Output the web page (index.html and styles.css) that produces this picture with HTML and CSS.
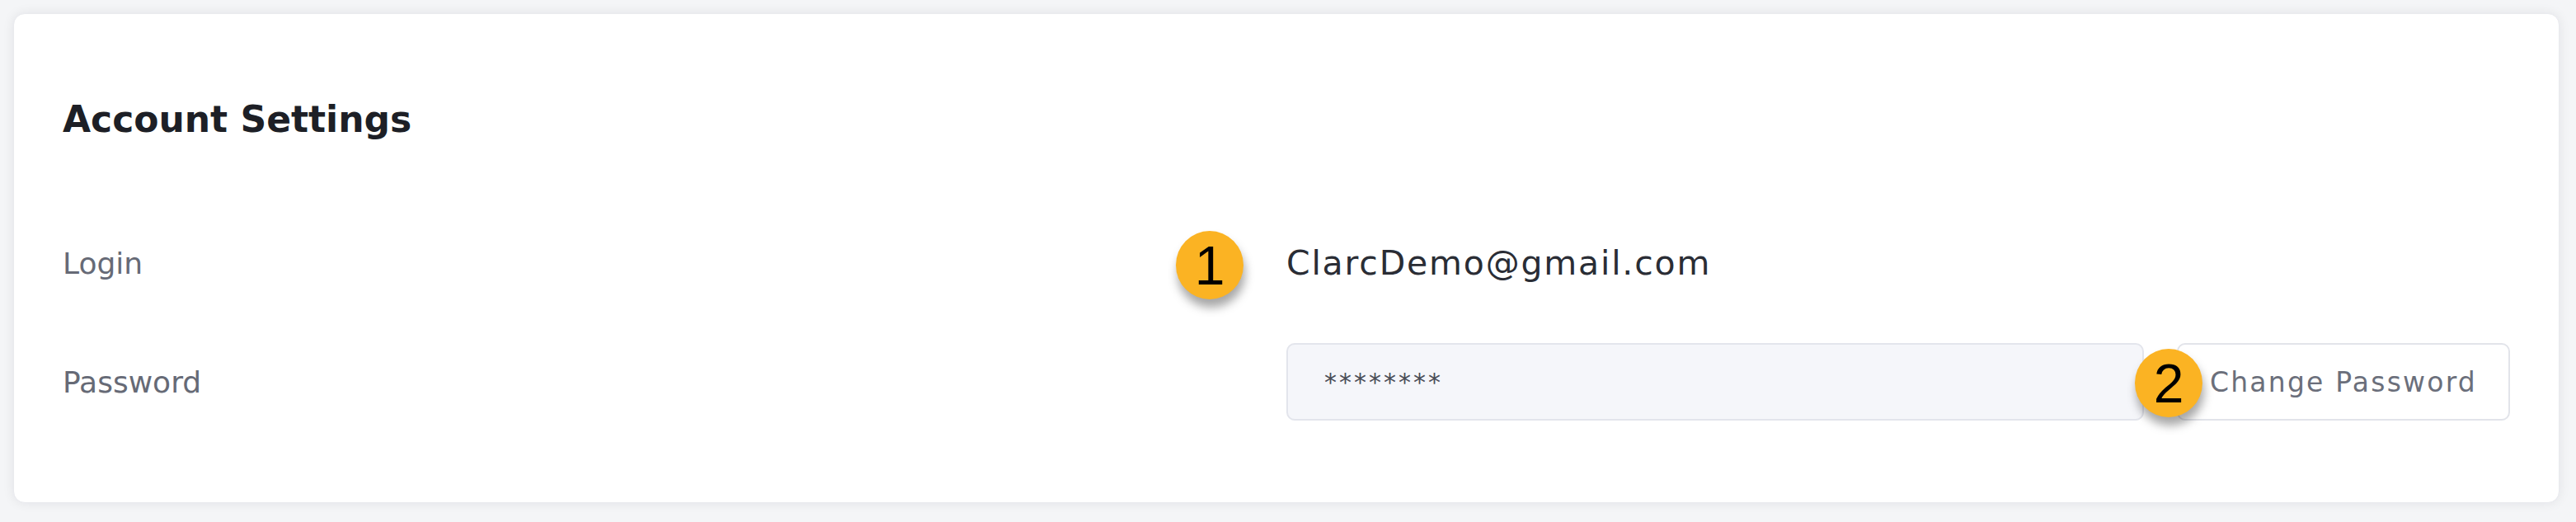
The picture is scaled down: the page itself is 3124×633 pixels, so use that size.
FILE: index.html
```html
<!DOCTYPE html>
<html lang="en">
<head>
    <meta charset="UTF-8">
    <meta name="viewport" content="width=device-width, initial-scale=1.0">
    <title>Account Settings</title>
    <link rel="stylesheet" href="styles.css">
</head>
<body>
    <section class="card">
        <h1 class="card-title">Account Settings</h1>
        <div class="setting-row">
            <span class="setting-label">Login</span>
            <div class="setting-value">
                <span class="marker marker-login">1</span>
                <span class="email">ClarcDemo@gmail.com</span>
            </div>
        </div>
        <div class="setting-row">
            <span class="setting-label">Password</span>
            <div class="setting-value password-value">
                <div class="password-field">********</div>
                <button class="btn-change">
                    <span class="marker marker-change">2</span>
                    Change Password
                </button>
            </div>
        </div>
    </section>
</body>
</html>
```

FILE: styles.css
```css
* {
    margin: 0;
    padding: 0;
    box-sizing: border-box;
    font-family: "DejaVu Sans", sans-serif;
}

body {
    background: #f4f5f7;
    padding: 16px 20px 23px 16px;
}

.card {
    background: #fff;
    border: 1px solid #e9eaee;
    border-radius: 14px;
    box-shadow: 0 0 14px rgba(20, 24, 40, 0.08);
    padding: 102px 59px 99px;
    display: flex;
    flex-direction: column;
    gap: 50px;
}

.card-title {
    font-size: 44px;
    font-weight: 700;
    line-height: 52px;
    color: #1d1f26;
    margin-bottom: 51px;
}

.setting-row {
    display: grid;
    grid-template-columns: 1fr 1fr;
    align-items: center;
    height: 94px;
}

.setting-label {
    font-size: 36px;
    color: #666a76;
}

.setting-value {
    position: relative;
    display: flex;
    align-items: center;
    height: 100%;
}

.email {
    font-size: 41px;
    letter-spacing: 1.8px;
    color: #2a2d35;
}

.password-value {
    gap: 40px;
}

.password-field {
    flex: 1;
    height: 100%;
    display: flex;
    align-items: center;
    padding-left: 44px;
    background: #f5f6fa;
    border: 2px solid #e3e5ec;
    border-radius: 10px;
    font-size: 30px;
    letter-spacing: 3px;
    color: #4a4d57;
}

.btn-change {
    position: relative;
    width: 404px;
    height: 100%;
    background: #fff;
    border: 2px solid #e2e4ea;
    border-radius: 10px;
    font-size: 33px;
    letter-spacing: 2.2px;
    color: #6b6f7b;
    cursor: pointer;
}

.marker {
    position: absolute;
    width: 82px;
    height: 83px;
    border-radius: 50%;
    background: #fbb323;
    box-shadow: 2px 10px 12px rgba(0, 0, 0, 0.35);
    display: flex;
    align-items: center;
    justify-content: center;
    font-family: "Liberation Sans", Arial, sans-serif;
    font-size: 66px;
    letter-spacing: 0;
    color: #000;
}

.marker-login {
    left: -134px;
    top: 8px;
}

.marker-change {
    left: -53px;
    top: 5px;
}
```
